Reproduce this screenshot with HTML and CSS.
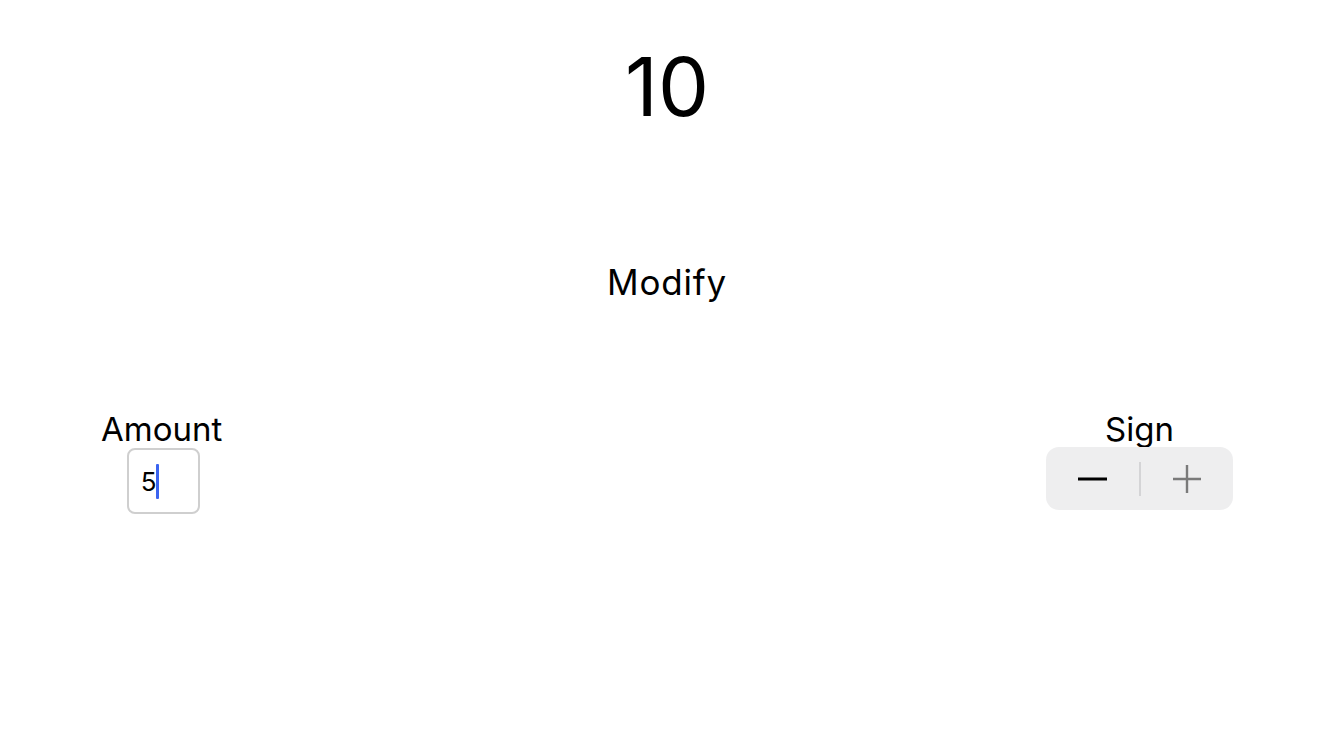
FILE: index.html
```html
<!DOCTYPE html>
<html>
<head>
<meta charset="utf-8">
<link rel="stylesheet" href="styles.css">
</head>
<body>
<main class="screen">
  <div class="value">10</div>
  <div class="heading">Modify</div>
  <div class="controls">
    <div class="field">
      <div class="label">Amount</div>
      <div class="input"><span class="input-text">5</span><span class="caret"></span></div>
    </div>
    <div class="field">
      <div class="label">Sign</div>
      <div class="segmented">
        <div class="segment">
          <svg width="30" height="4" viewBox="0 0 30 4"><rect x="1" y="0.5" width="29" height="3" fill="#000"/></svg>
        </div>
        <div class="divider"></div>
        <div class="segment">
          <svg width="30" height="30" viewBox="0 0 30 30"><path d="M15 1v28M1 15h28" stroke="#7a7a7a" stroke-width="2.4" fill="none"/></svg>
        </div>
      </div>
    </div>
  </div>
</main>
</body>
</html>
```
FILE: styles.css
```css
html, body {
  margin: 0;
  padding: 0;
  background: #fff;
}
body {
  font-family: Inter, "Liberation Sans", sans-serif;
  color: #000;
}
.screen {
  width: 1334px;
  height: 750px;
  display: flex;
  flex-direction: column;
  align-items: center;
}
.value {
  margin-top: 43px;
  font-size: 81px;
  line-height: 88px;
  font-weight: 400;
}
.heading {
  margin-top: 131px;
  font-size: 35px;
  line-height: 41px;
  letter-spacing: 0.8px;
}
.controls {
  align-self: stretch;
  margin-top: 108px;
  padding: 0 101px;
  display: flex;
  justify-content: space-between;
}
.field {
  display: flex;
  flex-direction: column;
  align-items: center;
}
.label {
  font-size: 33px;
  line-height: 36px;
}
.input {
  margin-top: 1px;
  width: 57px;
  height: 62px;
  border: 2px solid #cfcfcf;
  border-radius: 8px;
  display: flex;
  align-items: center;
  padding-left: 12px;
  margin-left: 3px;
}
.input-text {
  font-size: 26px;
}
.caret {
  width: 3px;
  height: 35px;
  background: #3a64f0;
  border-radius: 1px;
  margin-left: 0;
}
.segmented {
  margin-top: 0;
  width: 187px;
  height: 63px;
  background: #eeeeef;
  border-radius: 13px;
  display: flex;
  align-items: center;
}
.segment {
  flex: 1;
  display: flex;
  justify-content: center;
  align-items: center;
}
.divider {
  width: 2px;
  height: 34px;
  background: #d4d4d6;
}
```
